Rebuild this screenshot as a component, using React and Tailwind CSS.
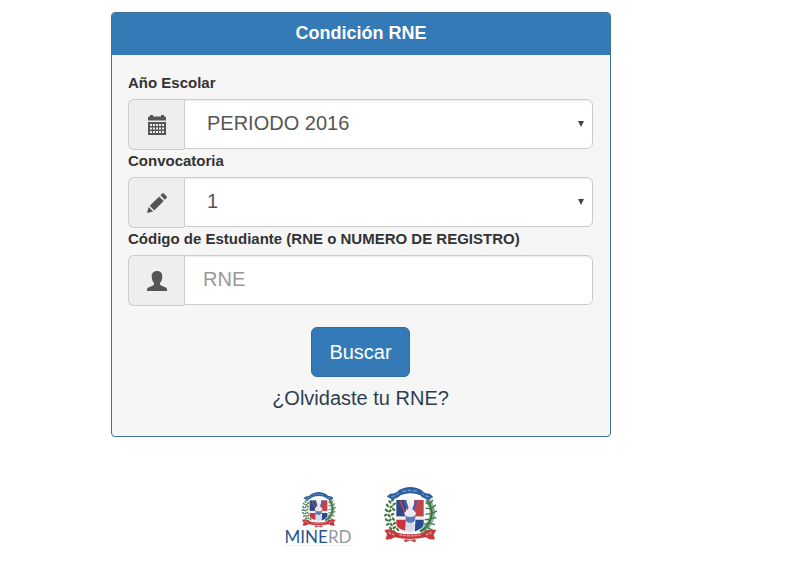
import React, { useState } from 'react';

const CalendarIcon = () => (
    <svg width="20" height="20" viewBox="0 0 20 20" fill="#555555" aria-hidden="true">
        <path d="M3 0h3v1.500h8V0h3v1.500h1.500l.5 1V5.500H1v-3l.5-1H3z" />
        <path fillRule="evenodd" d="M1 7h18v13H1zM3 9v2h2V9zm3 0v2h2V9zm3 0v2h2V9zm3 0v2h2V9zm3 0v2h2V9zM3 12.500v2h2v-2zm3 0v2h2v-2zm3 0v2h2v-2zm3 0v2h2v-2zm3 0v2h2v-2zM3 16v2h2v-2zm3 0v2h2v-2zm3 0v2h2v-2zm3 0v2h2v-2zm3 0v2h2v-2z" />
    </svg>
);

const PencilIcon = () => (
    <svg width="20" height="20" viewBox="0 0 20 20" fill="#555555" aria-hidden="true">
        <path d="M0 20l1.6-6 4.6 4.5z" />
        <path d="M2.7 12.8L12.2 3.4l4.5 4.5-9.4 9.5z" />
        <path d="M13.4 2.2L15.2.5q.8-.8 1.6 0l2.8 2.8q.8.8 0 1.6l-1.8 1.8z" />
    </svg>
);

const UserIcon = () => (
    <svg width="20" height="20" viewBox="0 0 20 20" fill="#555555" aria-hidden="true">
        <path d="M10 0C6.300 0 4.700 2.400 4.700 5.600c0 2.800.9 5 2.300 6.300v1.100c0 .7-.4 1.100-1 1.400L1.300 16.400Q0 17 0 18.300V20h20v-1.700q0-1.300-1.300-1.900L14 14.400c-.6-.3-1-.7-1-1.400v-1.100c1.400-1.300 2.300-3.500 2.300-6.300C15.300 2.400 13.700 0 10 0z" />
    </svg>
);

// Olive (left) and palm (right) leaves around the shield
const leaves = [
    [28, 38], [20, 44], [33, 50], [13, 54], [24, 58], [10, 68], [20, 70], [31, 66],
    [8, 82], [18, 84], [28, 80], [10, 96], [20, 97], [30, 94], [14, 109], [24, 110], [34, 106],
    [22, 121], [33, 119], [43, 124], [30, 131]
];

// Dominican coat of arms
const Escudo = ({ className }) => (
    <svg className={className} viewBox="0 0 158 164" preserveAspectRatio="none" aria-hidden="true">
        <g fill="#447a48">
            {leaves.map(([x, y], i) => (
                <ellipse key={i} cx={x} cy={y} rx="6" ry="3.500" transform={`rotate(${i % 2 ? 50 : -30} ${x} ${y})`} />
            ))}
        </g>
        <g fill="none" stroke="#3f7a50" strokeWidth="4">
            <path d="M130 36q26 38 4 72-8 14-24 22" stroke="#8fb592" strokeWidth="16" />
            <path d="M128 34q26 40 6 72-8 16-26 24" stroke="#2f6b45" strokeWidth="5" />
            <path d="M136 52l10-14m-5 26l14-12m-13 26l16-8m-18 22l16-2m-20 16l16 4m-22 8l14 8m-22 0l10 10M134 50l-10-4m14 18l-14-2m15 16l-15 2m12 14l-14 2m8 12l-12 0" />
        </g>
        <path d="M11 28l10-8Q40 20 46 9l15-6q18-6 38 0l14 6q6 10 24 11l10 9-10 7q-20-1-28-12-29-11-58 0-8 10-26 12z" fill="#2b5f9e" />
        <path d="M56 14q23-8 46 0M24 28q14-1 22-10m89 10q-12-1-20-9" fill="none" stroke="#6f9cc8" strokeWidth="4" strokeDasharray="12 4" />
        <path d="M38 36h82v72q0 18-41 30-41-12-41-30z" fill="#f3f1f4" />
        <path d="M39 38h29v48H39z" fill="#2e4a8c" />
        <path d="M91 38h28v48H91z" fill="#c64248" />
        <path d="M39 96h28l-2 32q-26-8-26-20z" fill="#c9373d" />
        <path d="M95 96h24v12q0 12-26 22z" fill="#284b92" />
        <path d="M50 40l20 48m40-48L92 88" stroke="#b9474f" strokeWidth="5" />
        <path d="M64 40l10 28m24-28L88 68" stroke="#4a5f9f" strokeWidth="7" />
        <path d="M74 64l5-24 6 24 12 12-6 16H67l-5-16z" fill="#e9e8f2" />
        <path d="M66 84q14 8 28 0v12q-2 9-15 10-11-1-13-10z" fill="#5d7bb6" />
        <path d="M67 110l12-6 14 6-2 16-12 6-12-6z" fill="#d3d9ea" />
        <path d="M4 126l14-2q14 2 24 10 38 9 74 0 10-8 24-10l16 2-8 13 4 14q-16 3-26-6-48 10-92 0-10 8-27 6l5-14z" fill="#c33b40" />
        <path d="M48 140q30 6 62 0M16 133l16 7m110-7l-16 7" fill="none" stroke="#e39c9a" strokeWidth="4" strokeDasharray="8 3" />
        <path d="M66 152l13 3 14-3 5 6-6 4-13-5-13 5-6-4z" fill="#bd5552" />
    </svg>
);

const Field = ({ id, label, icon, children }) => (
    <div>
        <label htmlFor={id} className="block h-[27px] pt-px text-[15px] leading-5 font-bold text-[#333333]">
            {label}
        </label>
        <div className="flex items-start">
            <span className="flex h-[51px] w-14 shrink-0 items-center justify-center rounded-l-md border border-r-0 border-[#cccccc] bg-[#eeeeee]">
                {icon}
            </span>
            <div className="relative h-[50px] flex-1">{children}</div>
        </div>
    </div>
);

const controlClass = 'block h-[50px] w-full appearance-none rounded-r-md border border-[#cccccc] bg-white pb-0.5 text-xl text-[#555555] shadow-[inset_0_1px_1px_rgba(0,0,0,0.075)] outline-none focus:border-[#66afe9]';

const SelectArrow = () => (
    <svg className="pointer-events-none absolute top-[22px] right-[9px]" width="6" height="6" viewBox="0 0 6 6" fill="#444444" aria-hidden="true">
        <path d="M0 0h6L3 6z" />
    </svg>
);

const App = () => {
    const [periodo, setPeriodo] = useState('2016');
    const [convocatoria, setConvocatoria] = useState('1');
    const [rne, setRne] = useState('');

    return (
        <div className="bg-white pt-3 pr-[78px] font-['Liberation_Sans',Arial,sans-serif]">
            <main className="mx-auto w-full max-w-[500px]">
                <section className="overflow-hidden rounded border border-[#3c7199] bg-[#f6f6f6]">
                    <h1 className="bg-[#337ab7] pt-2 pb-2.5 text-center text-lg leading-6 font-bold text-white">
                        Condición RNE
                    </h1>
                    <form className="pt-[17px] pr-[17px] pb-6 pl-4" onSubmit={(e) => e.preventDefault()}>
                        <Field id="periodo" label="Año Escolar" icon={<CalendarIcon />}>
                            <select
                                id="periodo"
                                value={periodo}
                                onChange={(e) => setPeriodo(e.target.value)}
                                className={`${controlClass} px-[22px]`}
                            >
                                <option value="2016">PERIODO 2016</option>
                            </select>
                            <SelectArrow />
                        </Field>
                        <Field id="convocatoria" label="Convocatoria" icon={<PencilIcon />}>
                            <select
                                id="convocatoria"
                                value={convocatoria}
                                onChange={(e) => setConvocatoria(e.target.value)}
                                className={`${controlClass} px-[22px]`}
                            >
                                <option value="1">1</option>
                                <option value="2">2</option>
                            </select>
                            <SelectArrow />
                        </Field>
                        <Field id="rne" label="Código de Estudiante (RNE o NUMERO DE REGISTRO)" icon={<UserIcon />}>
                            <input
                                id="rne"
                                type="text"
                                placeholder="RNE"
                                value={rne}
                                onChange={(e) => setRne(e.target.value)}
                                className={`${controlClass} px-[18px] placeholder:text-[#999999]`}
                            />
                        </Field>
                        <div className="mt-[21px] flex flex-col items-center gap-[7px]">
                            <button type="submit" className="h-[50px] rounded-md border border-[#2e6da4] bg-[#337ab7] px-[17px] text-xl text-white">
                                Buscar
                            </button>
                            <a href="#recuperar" className="text-xl text-[#2c3e50]">
                                ¿Olvidaste tu RNE?
                            </a>
                        </div>
                    </form>
                </section>

                <footer className="mt-[50px] flex items-start justify-center gap-8">
                    <div className="mt-[5px] flex flex-col items-center">
                        <Escudo className="h-9 w-[35px]" />
                        <span className="font-['Lato',sans-serif] text-[17px] leading-[17px] text-[#2b548c]">
                            MINE<span className="text-[#92979d]">RD</span>
                        </span>
                        <span className="w-full border-b border-dotted border-[#e4e7eb]" />
                    </div>
                    <Escudo className="h-14 w-[54px]" />
                </footer>
            </main>
        </div>
    );
};

export default App;
